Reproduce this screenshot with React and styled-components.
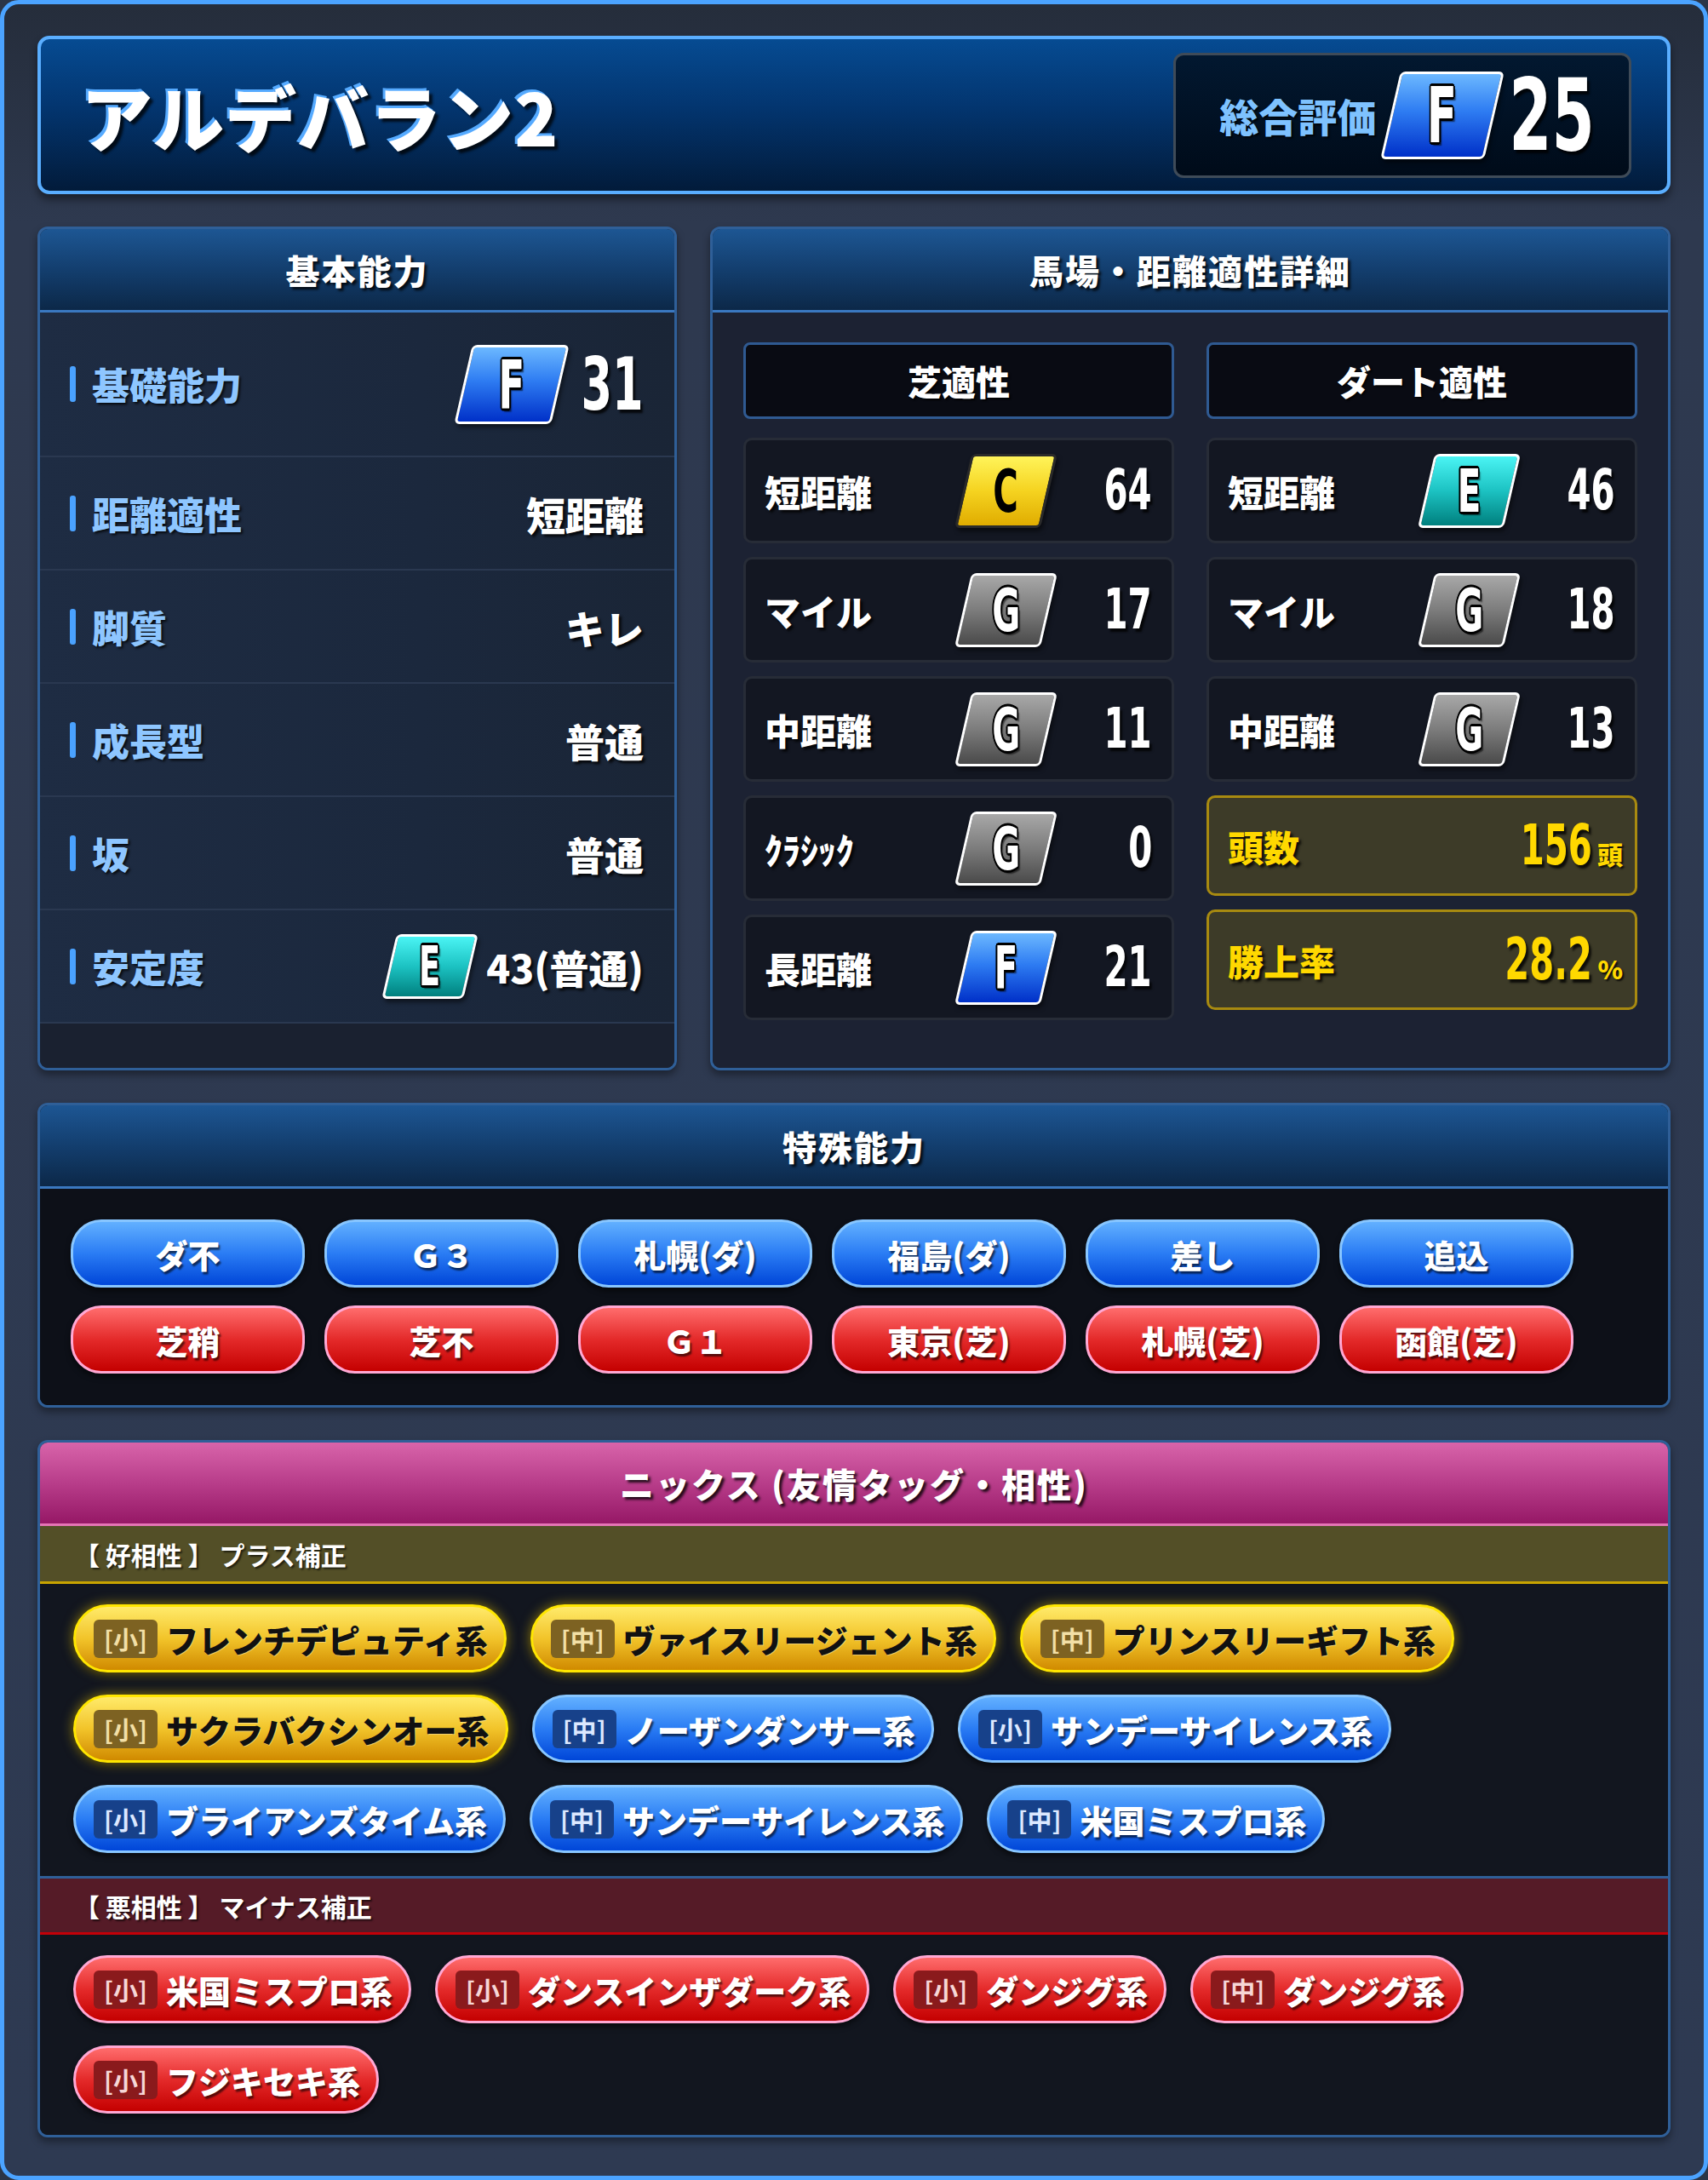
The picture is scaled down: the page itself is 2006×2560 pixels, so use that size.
import styled, { createGlobalStyle } from 'styled-components';

const JP = `"Noto Sans CJK JP", "Noto Sans", sans-serif`;
const NUM = `"DejaVu Sans Condensed", "Liberation Sans", sans-serif`;
const SX = 0.68;

const GlobalStyle = createGlobalStyle`
  html, body { margin: 0; padding: 0; background: #2b3547; }
  * { box-sizing: border-box; }
  body { font-family: ${JP}; }
`;

const Page = styled.div`
  width: 2006px;
  height: 2560px;
  border: 5px solid #4ba3ff;
  border-radius: 22px;
  background: linear-gradient(180deg, #252d3b 0%, #2e394f 10%, #2e3a52 100%);
  padding: 37px 39px 0;
  display: flex;
  flex-direction: column;
  gap: 38px;
`;

/* ---------- header ---------- */

const Header = styled.div`
  height: 186px;
  border: 4px solid #5aaeff;
  border-radius: 14px;
  background: linear-gradient(180deg, #064b92 0%, #03356f 45%, #021b3a 100%);
  box-shadow: 0 6px 10px rgba(0, 0, 0, 0.45);
  display: flex;
  align-items: center;
  justify-content: space-between;
  padding: 0 42px 0 47px;
`;

const Title = styled.h1`
  margin: 0;
  font-size: 84px;
  font-weight: 900;
  color: #fff;
  letter-spacing: 1px;
  text-shadow: -3px -3px 0 #55aaff, 4px 4px 3px rgba(0, 0, 0, 0.75);
`;

const TotalBox = styled.div`
  height: 147px;
  width: 538px;
  border: 3px solid #3f4b58;
  border-radius: 12px;
  background: linear-gradient(180deg, #021830 0%, #000b19 100%);
  display: flex;
  align-items: center;
  justify-content: flex-end;
  gap: 17px;
  padding: 0 40px 0 34px;
`;

const TotalLabel = styled.span`
  flex: none;
  white-space: nowrap;
  font-size: 46px;
  font-weight: 900;
  color: #7ec2ff;
  text-shadow: 2px 2px 2px rgba(0, 0, 0, 0.8);
`;

/* ---------- grade badge & numbers ---------- */

const GRADE = {
  F: { bg: 'linear-gradient(180deg,#6cb8ff 0%,#2e7cf2 45%,#0030c8 100%)', border: '#fff', color: '#fff' },
  E: { bg: 'linear-gradient(180deg,#4af4f4 0%,#1cc2c2 50%,#00807e 100%)', border: '#fff', color: '#fff' },
  G: { bg: 'linear-gradient(180deg,#a8a8a8 0%,#7c7c7c 50%,#4a4a4a 100%)', border: '#fff', color: '#fff' },
  C: { bg: 'linear-gradient(180deg,#fff45a 0%,#f5d320 50%,#e0ac00 100%)', border: '#2a2a2a', color: '#000' },
};

const outline = `-2px -2px 0 #000, 2px -2px 0 #000, -2px 2px 0 #000, 2px 2px 0 #000,
  0 3px 0 #000, 3px 0 0 #000, -3px 0 0 #000, 0 -3px 0 #000, 4px 4px 2px rgba(0,0,0,.6)`;

const BadgeBox = styled.div`
  width: ${(p) => p.$w}px;
  height: ${(p) => p.$h}px;
  flex: none;
  transform: skewX(-13deg);
  border: 3px solid ${(p) => GRADE[p.$g].border};
  border-radius: 6px;
  background: ${(p) => GRADE[p.$g].bg};
  box-shadow: 3px 4px 5px rgba(0, 0, 0, 0.5);
  display: flex;
  align-items: center;
  justify-content: center;
`;

const BadgeLetter = styled.span`
  display: block;
  transform: skewX(13deg) scaleX(0.64);
  font-family: ${NUM};
  font-weight: 700;
  font-size: ${(p) => p.$fs}px;
  line-height: 1;
  color: ${(p) => GRADE[p.$g].color};
  text-shadow: ${(p) => (p.$g === 'C' ? 'none' : outline)};
`;

const Badge = ({ g, w, h, fs }) => (
  <BadgeBox $g={g} $w={w} $h={h}>
    <BadgeLetter $g={g} $fs={fs}>{g}</BadgeLetter>
  </BadgeBox>
);

const NumText = styled.span`
  display: inline-block;
  font-family: ${NUM};
  font-weight: 700;
  font-size: ${(p) => p.$fs}px;
  line-height: 1;
  color: ${(p) => p.$color || '#fff'};
  text-shadow: 4px 4px 3px rgba(0, 0, 0, 0.8);
  transform: scaleX(${SX});
  transform-origin: right center;
  margin-left: -${(p) => p.$shift}px;
`;

const numWidth = (text, fs) =>
  [...String(text)].reduce((a, ch) => a + (/\d/.test(ch) ? 0.626 : 0.343), 0) * fs;

const Num = ({ fs, color, children }) => (
  <NumText $fs={fs} $color={color} $shift={Math.round((1 - SX) * numWidth(children, fs))}>
    {children}
  </NumText>
);

/* ---------- panels ---------- */

const Panel = styled.section`
  border: 3px solid #2f5f98;
  border-radius: 12px;
  overflow: hidden;
  box-shadow: 0 5px 10px rgba(0, 0, 0, 0.4);
  display: flex;
  flex-direction: column;
  background: ${(p) => p.$bg || '#1b2232'};
`;

const PanelHead = styled.div`
  height: 98px;
  flex: none;
  border-bottom: 3px solid ${(p) => (p.$pink ? '#e674b6' : '#3a78c0')};
  background: ${(p) =>
    p.$pink
      ? 'linear-gradient(180deg,#d864aa 0%,#b83d8a 50%,#961866 100%)'
      : 'linear-gradient(180deg,#1d5693 0%,#133e6e 50%,#0c2848 100%)'};
  display: flex;
  align-items: center;
  justify-content: center;
  font-size: 40px;
  font-weight: 900;
  letter-spacing: 2px;
  color: #fff;
  text-shadow: 3px 3px 3px rgba(0, 0, 0, 0.8);
`;

const TwoCol = styled.div`
  display: grid;
  grid-template-columns: 751px 1fr;
  gap: 39px;
`;

/* basic */

const BasicBody = styled.div`
  flex: 1;
  display: flex;
  flex-direction: column;
  padding-bottom: 52px;
  background: #1a2130;
`;

const BasicRow = styled.div`
  height: ${(p) => (p.$tall ? 170 : 133)}px;
  border-bottom: 2px solid #2a3850;
  background: linear-gradient(90deg, #1e2c43 0%, #1b283d 60%, #1a2536 100%);
  display: flex;
  align-items: center;
  justify-content: space-between;
  padding: 0 36px 0 35px;
`;

const RowLabel = styled.div`
  display: flex;
  align-items: center;
  gap: 19px;
  font-size: 44px;
  font-weight: 900;
  color: #8ec6ff;
  text-shadow: 2px 2px 3px rgba(0, 0, 0, 0.8);
`;

const Bar = styled.span`
  width: 7px;
  height: 42px;
  border-radius: 3px;
  background: #4aa2ff;
`;

const RowValue = styled.div`
  display: flex;
  align-items: center;
  gap: ${(p) => p.$gap || 0}px;
  font-size: 46px;
  font-weight: 900;
  color: #fff;
  text-shadow: 3px 3px 3px rgba(0, 0, 0, 0.8);
`;

/* track */

const TrackBody = styled.div`
  flex: 1;
  display: grid;
  grid-template-columns: 1fr 1fr;
  gap: 38px;
  padding: 35px 36px;
  background: #1c2233;
`;

const TrackCol = styled.div`
  display: flex;
  flex-direction: column;
  gap: 16px;
`;

const SubHead = styled.div`
  height: 90px;
  margin-bottom: 6px;
  border: 3px solid #2f5a92;
  border-radius: 8px;
  background: #090b13;
  display: flex;
  align-items: center;
  justify-content: center;
  font-size: 40px;
  font-weight: 900;
  color: #fff;
  text-shadow: 2px 2px 2px rgba(0, 0, 0, 0.8);
`;

const TrackRow = styled.div`
  height: 124px;
  border: 3px solid #272c37;
  border-radius: 10px;
  background: #131722;
  display: grid;
  grid-template-columns: 1fr 124px 110px;
  align-items: center;
  padding: 0 23px 0 22px;
`;

const TrackLabel = styled.span`
  font-size: 42px;
  font-weight: 900;
  color: #fff;
  text-shadow: 3px 3px 3px rgba(0, 0, 0, 0.8);
`;

const BadgeCell = styled.div`
  display: flex;
  justify-content: center;
`;

const NumCell = styled.div`
  text-align: right;
`;

const GoldCard = styled.div`
  height: 118px;
  border: 3px solid #a88a10;
  border-radius: 10px;
  background: #3d3b28;
  display: flex;
  align-items: center;
  justify-content: space-between;
  padding: 0 14px 0 22px;
`;

const GoldLabel = styled.span`
  font-size: 42px;
  font-weight: 900;
  color: #ffd800;
  text-shadow: 3px 3px 3px rgba(0, 0, 0, 0.8);
`;

const GoldValue = styled.span`
  display: flex;
  align-items: baseline;
  gap: 6px;
`;

const GoldUnit = styled.span`
  font-size: 30px;
  font-weight: 900;
  color: #ffd800;
  text-shadow: 2px 2px 2px rgba(0, 0, 0, 0.8);
`;

/* special */

const PillGrid = styled.div`
  display: flex;
  flex-wrap: wrap;
  gap: 21px 23px;
  padding: 36px 36px 37px;
  background: #0d1018;
`;

const PILL = {
  blue: {
    bg: 'linear-gradient(180deg,#62b0ff 0%,#2a7cf4 50%,#0046d8 100%)',
    border: '#88c6ff',
    color: '#fff',
    tagBg: '#17418a',
    tagColor: '#dce8ff',
  },
  red: {
    bg: 'linear-gradient(180deg,#ff6c6c 0%,#e42a2a 50%,#c40000 100%)',
    border: '#ffa8d4',
    color: '#fff',
    tagBg: '#8a1a1c',
    tagColor: '#f6d6d6',
  },
  gold: {
    bg: 'linear-gradient(180deg,#ffea6a 0%,#f2c42a 50%,#d08a00 100%)',
    border: '#ffe600',
    color: '#111',
    tagBg: '#7d6222',
    tagColor: '#f2dfa6',
  },
};

const SkillPill = styled.div`
  width: 275px;
  height: 80px;
  border: 3px solid ${(p) => PILL[p.$c].border};
  border-radius: 36px;
  background: ${(p) => PILL[p.$c].bg};
  box-shadow: 0 4px 6px rgba(0, 0, 0, 0.55);
  display: flex;
  align-items: center;
  justify-content: center;
  font-size: 38px;
  font-weight: 900;
  color: #fff;
  text-shadow: 2px 3px 2px rgba(0, 0, 0, 0.6);
`;

/* nicks */

const SectionLabel = styled.div`
  height: ${(p) => (p.$bad ? 69 : 68)}px;
  border-top: ${(p) => (p.$bad ? '3px solid #2f5f98' : 'none')};
  border-bottom: 3px solid ${(p) => (p.$bad ? '#c40008' : '#c8a400')};
  background: ${(p) => (p.$bad ? '#551b27' : '#534f27')};
  display: flex;
  align-items: center;
  padding-left: 40px;
  font-size: 30px;
  font-weight: 700;
  color: #fff;
  text-shadow: 2px 2px 2px rgba(0, 0, 0, 0.6);
`;

const NickWrap = styled.div`
  display: flex;
  flex-wrap: wrap;
  gap: 26px 28px;
  padding: 24px 39px ${(p) => p.$pb}px;
  background: #12161f;
`;

const NickPill = styled.div`
  height: 80px;
  border: 3px solid ${(p) => PILL[p.$c].border};
  border-radius: 40px;
  background: ${(p) => PILL[p.$c].bg};
  box-shadow: ${(p) =>
    p.$c === 'gold'
      ? '0 0 14px rgba(255, 214, 0, 0.55), 0 4px 6px rgba(0,0,0,.4)'
      : '0 4px 6px rgba(0, 0, 0, 0.55)'};
  display: inline-flex;
  align-items: center;
  gap: 10px;
  padding: 0 19px 0 21px;
  font-size: 38px;
  font-weight: 900;
  white-space: nowrap;
  color: ${(p) => PILL[p.$c].color};
  text-shadow: ${(p) => (p.$c === 'gold' ? '1px 1px 0 rgba(255,255,255,.35)' : '2px 3px 2px rgba(0,0,0,.6)')};
`;

const Tag = styled.span`
  width: 75px;
  height: 45px;
  border-radius: 6px;
  background: ${(p) => PILL[p.$c].tagBg};
  color: ${(p) => PILL[p.$c].tagColor};
  display: flex;
  align-items: center;
  justify-content: center;
  font-size: 29px;
  font-weight: 700;
  text-shadow: none;
`;

/* ---------- data ---------- */

const turf = [
  ['短距離', 'C', 64],
  ['マイル', 'G', 17],
  ['中距離', 'G', 11],
  ['ｸﾗｼｯｸ', 'G', 0],
  ['長距離', 'F', 21],
];

const dirt = [
  ['短距離', 'E', 46],
  ['マイル', 'G', 18],
  ['中距離', 'G', 13],
];

const skills = [
  ['ダ不', 'blue'], ['Ｇ３', 'blue'], ['札幌(ダ)', 'blue'], ['福島(ダ)', 'blue'], ['差し', 'blue'], ['追込', 'blue'],
  ['芝稍', 'red'], ['芝不', 'red'], ['Ｇ１', 'red'], ['東京(芝)', 'red'], ['札幌(芝)', 'red'], ['函館(芝)', 'red'],
];

const goodNicks = [
  ['小', 'フレンチデピュティ系', 'gold'],
  ['中', 'ヴァイスリージェント系', 'gold'],
  ['中', 'プリンスリーギフト系', 'gold'],
  ['小', 'サクラバクシンオー系', 'gold'],
  ['中', 'ノーザンダンサー系', 'blue'],
  ['小', 'サンデーサイレンス系', 'blue'],
  ['小', 'ブライアンズタイム系', 'blue'],
  ['中', 'サンデーサイレンス系', 'blue'],
  ['中', '米国ミスプロ系', 'blue'],
];

const badNicks = [
  ['小', '米国ミスプロ系'],
  ['小', 'ダンスインザダーク系'],
  ['小', 'ダンジグ系'],
  ['中', 'ダンジグ系'],
  ['小', 'フジキセキ系'],
];

const TrackItem = ({ row }) => (
  <TrackRow>
    <TrackLabel>{row[0]}</TrackLabel>
    <BadgeCell>
      <Badge g={row[1]} w={101} h={87} fs={70} />
    </BadgeCell>
    <NumCell>
      <Num fs={66}>{row[2]}</Num>
    </NumCell>
  </TrackRow>
);

const Nick = ({ size, name, c }) => (
  <NickPill $c={c}>
    <Tag $c={c}>[{size}]</Tag>
    {name}
  </NickPill>
);

export default function App() {
  return (
    <>
      <GlobalStyle />
      <Page>
        <Header>
          <Title>アルデバラン2</Title>
          <TotalBox>
            <TotalLabel>総合評価</TotalLabel>
            <Badge g="F" w={122} h={103} fs={90} />
            <Num fs={118}>25</Num>
          </TotalBox>
        </Header>

        <TwoCol>
          <Panel>
            <PanelHead>基本能力</PanelHead>
            <BasicBody>
              <BasicRow $tall>
                <RowLabel><Bar />基礎能力</RowLabel>
                <RowValue $gap={24}>
                  <Badge g="F" w={114} h={93} fs={78} />
                  <Num fs={86}>31</Num>
                </RowValue>
              </BasicRow>
              <BasicRow>
                <RowLabel><Bar />距離適性</RowLabel>
                <RowValue>短距離</RowValue>
              </BasicRow>
              <BasicRow>
                <RowLabel><Bar />脚質</RowLabel>
                <RowValue>キレ</RowValue>
              </BasicRow>
              <BasicRow>
                <RowLabel><Bar />成長型</RowLabel>
                <RowValue>普通</RowValue>
              </BasicRow>
              <BasicRow>
                <RowLabel><Bar />坂</RowLabel>
                <RowValue>普通</RowValue>
              </BasicRow>
              <BasicRow>
                <RowLabel><Bar />安定度</RowLabel>
                <RowValue $gap={18}>
                  <Badge g="E" w={96} h={76} fs={64} />
                  43(普通)
                </RowValue>
              </BasicRow>
            </BasicBody>
          </Panel>

          <Panel>
            <PanelHead>馬場・距離適性詳細</PanelHead>
            <TrackBody>
              <TrackCol>
                <SubHead>芝適性</SubHead>
                {turf.map((r) => (
                  <TrackItem key={r[0]} row={r} />
                ))}
              </TrackCol>
              <TrackCol>
                <SubHead>ダート適性</SubHead>
                {dirt.map((r) => (
                  <TrackItem key={r[0]} row={r} />
                ))}
                <GoldCard>
                  <GoldLabel>頭数</GoldLabel>
                  <GoldValue>
                    <Num fs={66} color="#ffd800">156</Num>
                    <GoldUnit>頭</GoldUnit>
                  </GoldValue>
                </GoldCard>
                <GoldCard>
                  <GoldLabel>勝上率</GoldLabel>
                  <GoldValue>
                    <Num fs={68} color="#ffd800">28.2</Num>
                    <GoldUnit>%</GoldUnit>
                  </GoldValue>
                </GoldCard>
              </TrackCol>
            </TrackBody>
          </Panel>
        </TwoCol>

        <Panel $bg="#0d1018">
          <PanelHead>特殊能力</PanelHead>
          <PillGrid>
            {skills.map(([t, c], i) => (
              <SkillPill key={i} $c={c}>{t}</SkillPill>
            ))}
          </PillGrid>
        </Panel>

        <Panel $bg="#12161f">
          <PanelHead $pink>ニックス (友情タッグ・相性)</PanelHead>
          <SectionLabel>【 好相性 】 プラス補正</SectionLabel>
          <NickWrap $pb={27}>
            {goodNicks.map(([s, n, c], i) => (
              <Nick key={i} size={s} name={n} c={c} />
            ))}
          </NickWrap>
          <SectionLabel $bad>【 悪相性 】 マイナス補正</SectionLabel>
          <NickWrap $pb={25}>
            {badNicks.map(([s, n], i) => (
              <Nick key={i} size={s} name={n} c="red" />
            ))}
          </NickWrap>
        </Panel>
      </Page>
    </>
  );
}
